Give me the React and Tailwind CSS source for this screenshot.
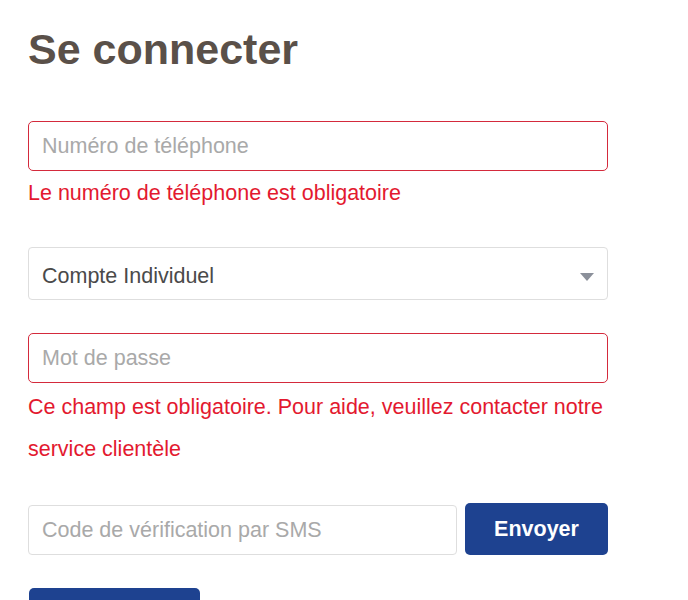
export default function App() {
  const font = { fontFamily: '"Liberation Sans", Arial, Helvetica, sans-serif' };
  return (
    <div className="min-h-[600px] bg-white overflow-hidden h-[600px]" style={font}>
      <div className="pl-[28px] w-[608px]">
        <h1 className="pt-[28px] text-[43px] leading-[42px] font-bold text-[#5a5049] mb-[51px]">Se connecter</h1>

        <div className="mb-[34px]">
          <div className="h-[50px] border border-[#d42a3c] rounded-[5px] flex items-center px-[13px]">
            <span className="text-[21.5px] text-[#a9a9a9]">Numéro de téléphone</span>
          </div>
          <p className="text-[21.5px] leading-[42px] text-[#e3192f] pt-[1px] -mb-[1px]">Le numéro de téléphone est obligatoire</p>
        </div>

        <div className="mb-[33px]">
          <div className="h-[53px] border border-[#dedede] rounded-[4px] flex items-center justify-between pl-[13px] pr-[13px] pt-[6px]">
            <span className="text-[21.5px] text-[#4a4a4a]">Compte Individuel</span>
            <svg width="14" height="8" viewBox="0 0 14 8"><path d="M0 0 L14 0 L7 8 Z" fill="#8b909a" /></svg>
          </div>
        </div>

        <div className="mb-[36px]">
          <div className="h-[50px] border border-[#d42a3c] rounded-[5px] flex items-center px-[13px]">
            <span className="text-[21.5px] text-[#a9a9a9]">Mot de passe</span>
          </div>
          <p className="text-[21.5px] leading-[42px] text-[#e3192f] pt-[3px] -mb-[3px]">Ce champ est obligatoire. Pour aide, veuillez contacter notre service clientèle</p>
        </div>

        <div className="flex items-end gap-[8px] mb-[33px]">
          <div className="flex-1 h-[50px] border border-[#dedede] rounded-[4px] flex items-center px-[13px]">
            <span className="text-[21.5px] text-[#a9a9a9]">Code de vérification par SMS</span>
          </div>
          <button className="w-[143px] h-[52px] rounded-[5px] bg-[#1e4290] text-white text-[21.5px] font-bold">Envoyer</button>
        </div>

        <button className="ml-[1px] w-[171px] h-[52px] rounded-[5px] bg-[#1e4290] text-white text-[21.5px] font-bold"></button>
      </div>
    </div>
  );
}
